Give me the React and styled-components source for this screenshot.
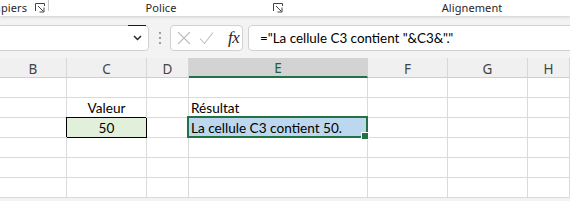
import React from 'react';
import styled, { createGlobalStyle } from 'styled-components';

const Global = createGlobalStyle`
  html, body {
    margin: 0;
    padding: 0;
    background: #ffffff;
    overflow: hidden;
  }
  * {
    box-sizing: border-box;
  }
`;

const Window = styled.div`
  width: 570px;
  height: 201px;
  overflow: hidden;
  font-family: 'Noto Sans', 'Open Sans', sans-serif;
  background: #f3f3f3;
`;

/* ribbon (group captions only) */

const Ribbon = styled.div`
  display: flex;
  align-items: flex-start;
  height: 16px;
  background: #ffffff;
  box-shadow: 0 1px 3px rgba(0, 0, 0, 0.16);
  position: relative;
  z-index: 1;
`;

const RibbonGroup = styled.div`
  display: flex;
  align-items: flex-start;
  justify-content: ${(p) => (p.$end ? 'flex-end' : 'flex-start')};
  flex: 0 0 ${(p) => p.$width}px;
  overflow: hidden;
  padding-right: ${(p) => p.$pad || 0}px;
`;

const GroupLabel = styled.span`
  flex: ${(p) => (p.$grow ? '1 1 auto' : '0 0 auto')};
  text-align: center;
  white-space: nowrap;
  font-size: 11px;
  line-height: 15px;
  color: #262626;
  letter-spacing: 0.1px;
`;

const LauncherIcon = styled.svg`
  flex: 0 0 auto;
  width: 10px;
  height: 10px;
  margin-top: 3px;
  margin-left: ${(p) => p.$gap || 0}px;
`;

const Separator = styled.div`
  flex: 0 0 1px;
  height: 11px;
  background: #c8c8c8;
`;

const Launcher = ({ gap }) => (
  <LauncherIcon $gap={gap} viewBox="0 0 10 10">
    <path d="M0.5 8V0.5H9.5V3" fill="none" stroke="#444" strokeWidth="1" />
    <path d="M3 3l5.2 5.2" fill="none" stroke="#444" strokeWidth="1" />
    <path d="M4.5 9h4.5V4.5" fill="none" stroke="#444" strokeWidth="1" />
  </LauncherIcon>
);

/* formula bar */

const FormulaBar = styled.div`
  display: flex;
  align-items: center;
  height: 42px;
  padding: 8px 0 7px;
`;

const NameBox = styled.div`
  display: flex;
  align-items: center;
  justify-content: flex-end;
  width: 153px;
  height: 26px;
  margin-left: -4px;
  background: #ffffff;
  border: 1px solid #d1d1d1;
  border-radius: 4px;
`;

const NameDrop = styled.div`
  display: flex;
  align-items: center;
  justify-content: center;
  width: 18px;
  height: 100%;
  border-top: 1px solid #1b1b1b;
  margin-top: -1px;
  margin-right: 2px;
`;

const Grip = styled.svg`
  width: 4px;
  height: 14px;
  margin: 0 8px 0 9px;
`;

const FxBox = styled.div`
  display: flex;
  align-items: center;
  width: 73px;
  height: 26px;
  padding: 0 0 0 6px;
  gap: 8px;
  background: #ffffff;
  border: 1px solid #d1d1d1;
  border-radius: 4px;
`;

const FxGlyph = styled.span`
  font-family: 'Liberation Serif', 'DejaVu Serif', serif;
  font-style: italic;
  font-size: 17px;
  line-height: 20px;
  color: #262626;
  margin-left: 6px;
  letter-spacing: -0.5px;
`;

const FormulaInput = styled.div`
  flex: 1 0 auto;
  height: 26px;
  margin-left: 5px;
  margin-right: -10px;
  padding: 0 0 0 11px;
  background: #ffffff;
  border: 1px solid #d1d1d1;
  border-radius: 4px;
  font-family: Lato, 'Noto Sans', sans-serif;
  font-size: 13.4px;
  line-height: 24px;
  color: #000000;
  white-space: nowrap;
`;

/* sheet */

const Sheet = styled.div`
  display: grid;
  grid-template-columns: 67px 80px 42px 179px 80px 80px 1fr;
  grid-auto-rows: 20px;
  background: #ffffff;
`;

const ColHeader = styled.div`
  display: flex;
  align-items: center;
  justify-content: center;
  padding-top: 2px;
  font-size: 13.5px;
  color: ${(p) => (p.$active ? '#1d5f3a' : '#444444')};
  background: ${(p) => (p.$active ? '#d3d3d3' : '#f0f0f0')};
  border-right: 1px solid ${(p) => (p.$active ? '#d3d3d3' : '#d8d8d8')};
  border-bottom: ${(p) => (p.$active ? '2px solid #217346' : '1px solid #d0d0d0')};
`;

const Cell = styled.div`
  position: relative;
  display: flex;
  align-items: center;
  justify-content: ${(p) => (p.$center ? 'center' : 'flex-start')};
  padding: 1px 2px 0;
  font-family: Lato, 'Noto Sans', sans-serif;
  font-size: 13.6px;
  color: #000000;
  white-space: nowrap;
  background: ${(p) => p.$fill || '#ffffff'};
  border-right: 1px solid ${(p) => (p.$boxed ? '#000000' : '#dadada')};
  border-bottom: 1px solid ${(p) => (p.$boxed ? '#000000' : '#dadada')};
  box-shadow: ${(p) => (p.$boxed ? '-1px -1px 0 #000000' : 'none')};
  z-index: ${(p) => (p.$boxed || p.$selected ? 1 : 0)};
`;

const SelectionFrame = styled.div`
  position: absolute;
  top: -2px;
  left: -2px;
  right: -1px;
  bottom: -1px;
  border: 2px solid #217346;
  pointer-events: none;
`;

const FillHandle = styled.div`
  position: absolute;
  right: -3px;
  bottom: -4px;
  width: 8px;
  height: 8px;
  background: #217346;
  border: 1px solid #ffffff;
`;

const columns = ['B', 'C', 'D', 'E', 'F', 'G', 'H'];

const rows = [
  {},
  { C: { text: 'Valeur', center: true }, E: { text: 'Résultat' } },
  {
    C: { text: '50', center: true, fill: '#e2efda', boxed: true },
    E: { text: 'La cellule C3 contient 50.', fill: '#bdd7ee', selected: true },
  },
  {},
  {},
  {},
];

const ChevronDown = () => (
  <svg width="9" height="6" viewBox="0 0 9 6">
    <path d="M1 1l3.5 3.5L8 1" fill="none" stroke="#262626" strokeWidth="1.5" />
  </svg>
);

const CancelIcon = () => (
  <svg width="14" height="14" viewBox="0 0 14 14">
    <path d="M1 1l12 12M13 1L1 13" fill="none" stroke="#bdbdbd" strokeWidth="1.1" />
  </svg>
);

const EnterIcon = () => (
  <svg width="15" height="14" viewBox="0 0 15 14">
    <path d="M1 7.5l4.5 5L14 1.5" fill="none" stroke="#bdbdbd" strokeWidth="1.1" />
  </svg>
);

export default function App() {
  return (
    <Window>
      <Global />
      <Ribbon>
        <RibbonGroup $width={48} $end $pad={3}>
          <GroupLabel>Presse-papiers</GroupLabel>
          <Launcher gap={8} />
        </RibbonGroup>
        <Separator />
        <RibbonGroup $width={237} $pad={3}>
          <GroupLabel $grow>Police</GroupLabel>
          <Launcher />
        </RibbonGroup>
        <RibbonGroup $width={372}>
          <GroupLabel $grow>Alignement</GroupLabel>
        </RibbonGroup>
      </Ribbon>

      <FormulaBar>
        <NameBox>
          <NameDrop>
            <ChevronDown />
          </NameDrop>
        </NameBox>
        <Grip viewBox="0 0 4 14">
          <circle cx="2" cy="2" r="1.1" fill="#8a8a8a" />
          <circle cx="2" cy="7" r="1.1" fill="#8a8a8a" />
          <circle cx="2" cy="12" r="1.1" fill="#8a8a8a" />
        </Grip>
        <FxBox>
          <CancelIcon />
          <EnterIcon />
          <FxGlyph>fx</FxGlyph>
        </FxBox>
        <FormulaInput>="La cellule C3 contient "&amp;C3&amp;"."</FormulaInput>
      </FormulaBar>

      <Sheet>
        {columns.map((c) => (
          <ColHeader key={c} $active={c === 'E'}>
            {c}
          </ColHeader>
        ))}
        {rows.map((row, r) =>
          columns.map((c) => {
            const cell = row[c] || {};
            return (
              <Cell
                key={`${c}${r}`}
                $center={cell.center}
                $fill={cell.fill}
                $boxed={cell.boxed}
                $selected={cell.selected}
              >
                {cell.text}
                {cell.selected && (
                  <SelectionFrame>
                    <FillHandle />
                  </SelectionFrame>
                )}
              </Cell>
            );
          })
        )}
      </Sheet>
    </Window>
  );
}
